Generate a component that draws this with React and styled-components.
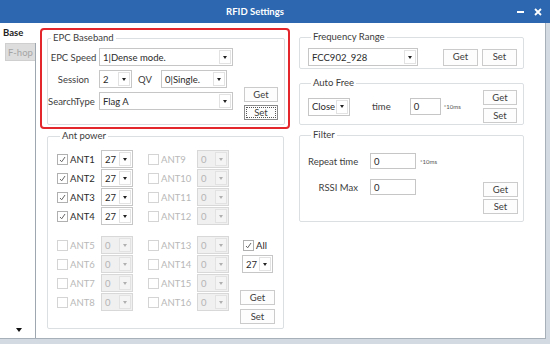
import React from 'react'
import styled, { createGlobalStyle } from 'styled-components'

const GlobalStyle = createGlobalStyle`
  * { box-sizing: border-box; }
  html, body { margin: 0; padding: 0; background: #fff; }
  body {
    font-family: Lato, "Open Sans", sans-serif;
    font-size: 9.5px;
    color: #3c3c3c;
  }
`

const Window = styled.div`
  width: 550px;
  height: 344px;
  display: flex;
  flex-direction: column;
  background: #d3dae1;
  overflow: hidden;
`

const TitleBar = styled.div`
  height: 23px;
  flex-shrink: 0;
  display: flex;
  align-items: center;
  background: #2c67b0;
  color: #fff;
`

const Title = styled.div`
  flex: 1;
  text-align: center;
  font-weight: 700;
`

const TitleControls = styled.div`
  width: 40px;
  display: flex;
  align-items: center;
  gap: 10px;
  padding-left: 7px;
`

const MinBar = styled.span`
  width: 7px;
  height: 2px;
  background: #fff;
`

const Body = styled.div`
  width: 546px;
  height: 316px;
  display: flex;
  background: #fff;
  border-right: 1px solid #a7b0b9;
  border-bottom: 1px solid #a7b0b9;
`

const Sidebar = styled.div`
  width: 36px;
  flex-shrink: 0;
  display: flex;
  flex-direction: column;
`

const BaseTab = styled.div`
  height: 20px;
  line-height: 20px;
  padding-left: 3px;
  font-weight: 700;
  color: #222;
`

const TabRest = styled.div`
  flex: 1;
  display: flex;
  flex-direction: column;
  border-right: 1px solid #9ea7af;
`

const HopTab = styled.div`
  margin-left: 5px;
  width: 30px;
  height: 18px;
  line-height: 18px;
  text-align: center;
  background: #dddddd;
  border: 1px solid #cfcfcf;
  border-right: none;
  color: #a5a5a5;
`

const DownArrow = styled.span`
  margin-top: auto;
  margin-bottom: 6px;
  margin-left: 16px;
  width: 0;
  height: 0;
  border-left: 3.5px solid transparent;
  border-right: 3.5px solid transparent;
  border-top: 4px solid #111;
`

const Main = styled.div`
  flex: 1;
  display: flex;
  gap: 8px;
  padding: 5px 0 0 4px;
`

const LeftCol = styled.div`
  width: 250px;
  display: flex;
  flex-direction: column;
`

const RightCol = styled.div`
  width: 226px;
  display: flex;
  flex-direction: column;
`

const RedBox = styled.div`
  height: 101px;
  border: 2px solid #e2262c;
  border-radius: 4px;
  padding: 1px 3px 0 5px;
`

const Group = styled.fieldset`
  margin: 0;
  padding: 0;
  min-width: 0;
  border: 1px solid #dcdfe2;
  border-radius: 2px;
`

const Legend = styled.legend`
  margin-left: 3px;
  padding: 0 2px;
  line-height: 14px;
  color: #3c3c3c;
`

const EpcGroup = styled(Group)`
  padding: 3px 0 4px 0;
`

const EpcBody = styled.div`
  display: flex;
  align-items: flex-start;
`

const EpcRows = styled.div`
  display: grid;
  grid-template-columns: 51px auto;
  row-gap: 4px;
  align-items: center;
`

const FieldLabel = styled.span`
  text-align: ${p => p.$align || 'center'};
  margin-left: ${p => p.$shift || 0}px;
  white-space: nowrap;
`

const Inline = styled.div`
  display: flex;
  align-items: center;
`

const InlineLabel = styled.span`
  width: 29px;
  padding-left: 6px;
`

const BtnStack = styled.div`
  display: flex;
  flex-direction: column;
  gap: ${p => p.$gap ?? 3}px;
  margin-top: ${p => p.$top || 0}px;
  margin-left: ${p => (p.$left == null ? 'auto' : `${p.$left}px`)};
`

const Button = styled.button`
  width: ${p => p.$w || 35}px;
  height: ${p => p.$h || 15}px;
  margin: 0;
  padding: 0;
  font: inherit;
  line-height: 1;
  color: #3c3c3c;
  background: #fdfdfd;
  border: 1px solid ${p => (p.$focus ? '#8a8a8a' : '#cbcbcb')};
  outline: ${p => (p.$focus ? '1px dotted #555' : 'none')};
  outline-offset: -3px;
`

const ComboBox = styled.div`
  display: flex;
  width: ${p => p.$w}px;
  height: ${p => p.$h || 18}px;
  margin-left: ${p => p.$left || 0}px;
  margin-top: ${p => p.$top || 0}px;
  border: 1px solid ${p => (p.$disabled ? '#d8d8d8' : '#c6c6c6')};
  background: ${p => (p.$disabled ? '#f0f0f0' : '#fff')};
  color: ${p => (p.$disabled ? '#b4b4b4' : '#2a2a2a')};
  flex-shrink: 0;
`

const ComboText = styled.span`
  flex: 1;
  display: flex;
  align-items: center;
  padding-left: 3px;
  white-space: nowrap;
  overflow: hidden;
`

const ComboArrow = styled.span`
  width: 12px;
  margin: 1px;
  display: flex;
  align-items: center;
  justify-content: center;
  border: 1px solid #e2e2e2;
  background: ${p => (p.$disabled ? '#f4f4f4' : '#fff')};

  &::after {
    content: '';
    border-left: 2.5px solid transparent;
    border-right: 2.5px solid transparent;
    border-top: 3px solid ${p => (p.$disabled ? '#b0b0b0' : '#222')};
  }
`

const Combo = ({ w, h, value, disabled, left, top }) => (
  <ComboBox $w={w} $h={h} $disabled={disabled} $left={left} $top={top}>
    <ComboText>{value}</ComboText>
    <ComboArrow $disabled={disabled} />
  </ComboBox>
)

const TextBox = styled.div`
  width: ${p => p.$w}px;
  height: ${p => p.$h || 16}px;
  margin-left: ${p => p.$left || 0}px;
  padding-left: 3px;
  display: flex;
  align-items: center;
  border: 1px solid #c6c6c6;
  background: #fff;
  color: #2a2a2a;
`

const Unit = styled.span`
  font-size: 6px;
  color: #555;
  margin-left: ${p => p.$left || 0}px;
`

const CheckBox = styled.span`
  width: 11px;
  height: 11px;
  flex-shrink: 0;
  display: flex;
  align-items: center;
  justify-content: center;
  border: 1px solid ${p => (p.$disabled ? '#d4d4d4' : '#b0b0b0')};
  background: #fff;
`

const CheckLabel = styled.label`
  display: flex;
  align-items: center;
  gap: 2px;
  width: ${p => (p.$w ? `${p.$w}px` : 'auto')};
  color: ${p => (p.$disabled ? '#b8b8b8' : '#2a2a2a')};
  white-space: nowrap;
`

const Check = ({ label, checked, disabled, w }) => (
  <CheckLabel $w={w} $disabled={disabled}>
    <CheckBox $disabled={disabled}>
      {checked && (
        <svg width="7" height="7" viewBox="0 0 7 7">
          <path d="M1 4 L2.7 5.8 L6 1" fill="none" stroke="#666" strokeWidth="1" />
        </svg>
      )}
    </CheckBox>
    {label}
  </CheckLabel>
)

const AntGroup = styled(Group)`
  padding: 7px 0 4px 9px;
  margin-left: 7px;
  width: 237px;
`

const AntGrid = styled.div`
  display: grid;
  grid-template-columns: 76px 81px;
  column-gap: 15px;
  row-gap: 1px;
  margin-bottom: ${p => p.$bottom || 0}px;
`

const AntPair = styled.div`
  display: flex;
  align-items: center;
  height: 18px;
`

const AntLower = styled.div`
  display: flex;
  align-items: flex-start;
`

const SideControls = styled.div`
  display: flex;
  flex-direction: column;
  margin-left: 11px;
`

const AllRow = styled.div`
  height: 18px;
  display: flex;
  align-items: center;
  padding-left: 3px;
`

const FreqGroup = styled(Group)`
  margin: 2px 0 0 1px;
  width: 225px;
  padding: 4px 5px 2px 8px;
`

const AutoGroup = styled(Group)`
  margin: 7px 0 0 1px;
  width: 225px;
  padding: 0 6px 1px 8px;
`

const FilterGroup = styled(Group)`
  margin: 3px 0 0 1px;
  width: 225px;
  padding: 11px 5px 7px 8px;
`

const Row = styled.div`
  display: flex;
  align-items: ${p => p.$align || 'center'};
`

const FilterRows = styled.div`
  display: grid;
  grid-template-columns: 50px auto auto;
  row-gap: 10px;
  align-items: center;
`

const TimeLabel = styled.span`
  margin-left: 22px;
`

const ants = [1, 2, 3, 4]

export default function App() {
  return (
    <>
      <GlobalStyle />
      <Window>
        <TitleBar>
          <Title>RFID Settings</Title>
          <TitleControls>
            <MinBar />
            <svg width="8" height="8" viewBox="0 0 8 8">
              <path d="M1 1 L7 7 M7 1 L1 7" stroke="#fff" strokeWidth="1.8" />
            </svg>
          </TitleControls>
        </TitleBar>
        <Body>
          <Sidebar>
            <BaseTab>Base</BaseTab>
            <TabRest>
              <HopTab>F-hop</HopTab>
              <DownArrow />
            </TabRest>
          </Sidebar>
          <Main>
            <LeftCol>
              <RedBox>
                <EpcGroup>
                  <Legend>EPC Baseband</Legend>
                  <EpcBody>
                    <EpcRows>
                      <FieldLabel>EPC Speed</FieldLabel>
                      <Combo w={134} value="1|Dense mode." />
                      <FieldLabel>Session</FieldLabel>
                      <Inline>
                        <Combo w={33} value="2" />
                        <InlineLabel>QV</InlineLabel>
                        <Combo w={66} value="0|Single." />
                      </Inline>
                      <FieldLabel $align="left">SearchType</FieldLabel>
                      <Combo w={134} value="Flag A" />
                    </EpcRows>
                    <BtnStack $top={39} $left={11}>
                      <Button $w={34}>Get</Button>
                      <Button $w={34} $focus>Set</Button>
                    </BtnStack>
                  </EpcBody>
                </EpcGroup>
              </RedBox>
              <AntGroup>
                <Legend>Ant power</Legend>
                <AntGrid $bottom={11}>
                  {ants.map(n => (
                    <React.Fragment key={n}>
                      <AntPair>
                        <Check w={44} checked label={`ANT${n}`} />
                        <Combo w={32} value="27" />
                      </AntPair>
                      <AntPair>
                        <Check w={49} disabled label={`ANT${n + 8}`} />
                        <Combo w={32} value="0" disabled />
                      </AntPair>
                    </React.Fragment>
                  ))}
                </AntGrid>
                <AntLower>
                  <AntGrid>
                    {ants.map(n => (
                      <React.Fragment key={n}>
                        <AntPair>
                          <Check w={44} disabled label={`ANT${n + 4}`} />
                          <Combo w={32} value="0" disabled />
                        </AntPair>
                        <AntPair>
                          <Check w={49} disabled label={`ANT${n + 12}`} />
                          <Combo w={32} value="0" disabled />
                        </AntPair>
                      </React.Fragment>
                    ))}
                  </AntGrid>
                  <SideControls>
                    <AllRow>
                      <Check checked label="All" />
                    </AllRow>
                    <Combo w={31} value="27" left={2} top={1} />
                    <BtnStack $top={17} $left={0} $gap={4}>
                      <Button>Get</Button>
                      <Button>Set</Button>
                    </BtnStack>
                  </SideControls>
                </AntLower>
              </AntGroup>
            </LeftCol>
            <RightCol>
              <FreqGroup>
                <Legend>Frequency Range</Legend>
                <Row>
                  <Combo w={110} value="FCC902_928" />
                  <BtnStack $left={25}>
                    <Button $h={17}>Get</Button>
                  </BtnStack>
                  <BtnStack $left={4}>
                    <Button $h={17}>Set</Button>
                  </BtnStack>
                </Row>
              </FreqGroup>
              <AutoGroup>
                <Legend>Auto Free</Legend>
                <Row>
                  <Combo w={42} value="Close" />
                  <TimeLabel>time</TimeLabel>
                  <TextBox $w={31} $h={17} $left={19}>0</TextBox>
                  <Unit $left={3}>*10ms</Unit>
                  <BtnStack>
                    <Button $w={34}>Get</Button>
                    <Button $w={34}>Set</Button>
                  </BtnStack>
                </Row>
              </AutoGroup>
              <FilterGroup>
                <Legend>Filter</Legend>
                <Row $align="flex-start">
                  <FilterRows>
                    <FieldLabel $align="right">Repeat time</FieldLabel>
                    <TextBox $w={46} $left={12}>0</TextBox>
                    <Unit $left={4}>*10ms</Unit>
                    <FieldLabel $align="right">RSSI Max</FieldLabel>
                    <TextBox $w={46} $left={12}>0</TextBox>
                    <span />
                  </FilterRows>
                  <BtnStack $top={29} $gap={2}>
                    <Button>Get</Button>
                    <Button>Set</Button>
                  </BtnStack>
                </Row>
              </FilterGroup>
            </RightCol>
          </Main>
        </Body>
      </Window>
    </>
  )
}
